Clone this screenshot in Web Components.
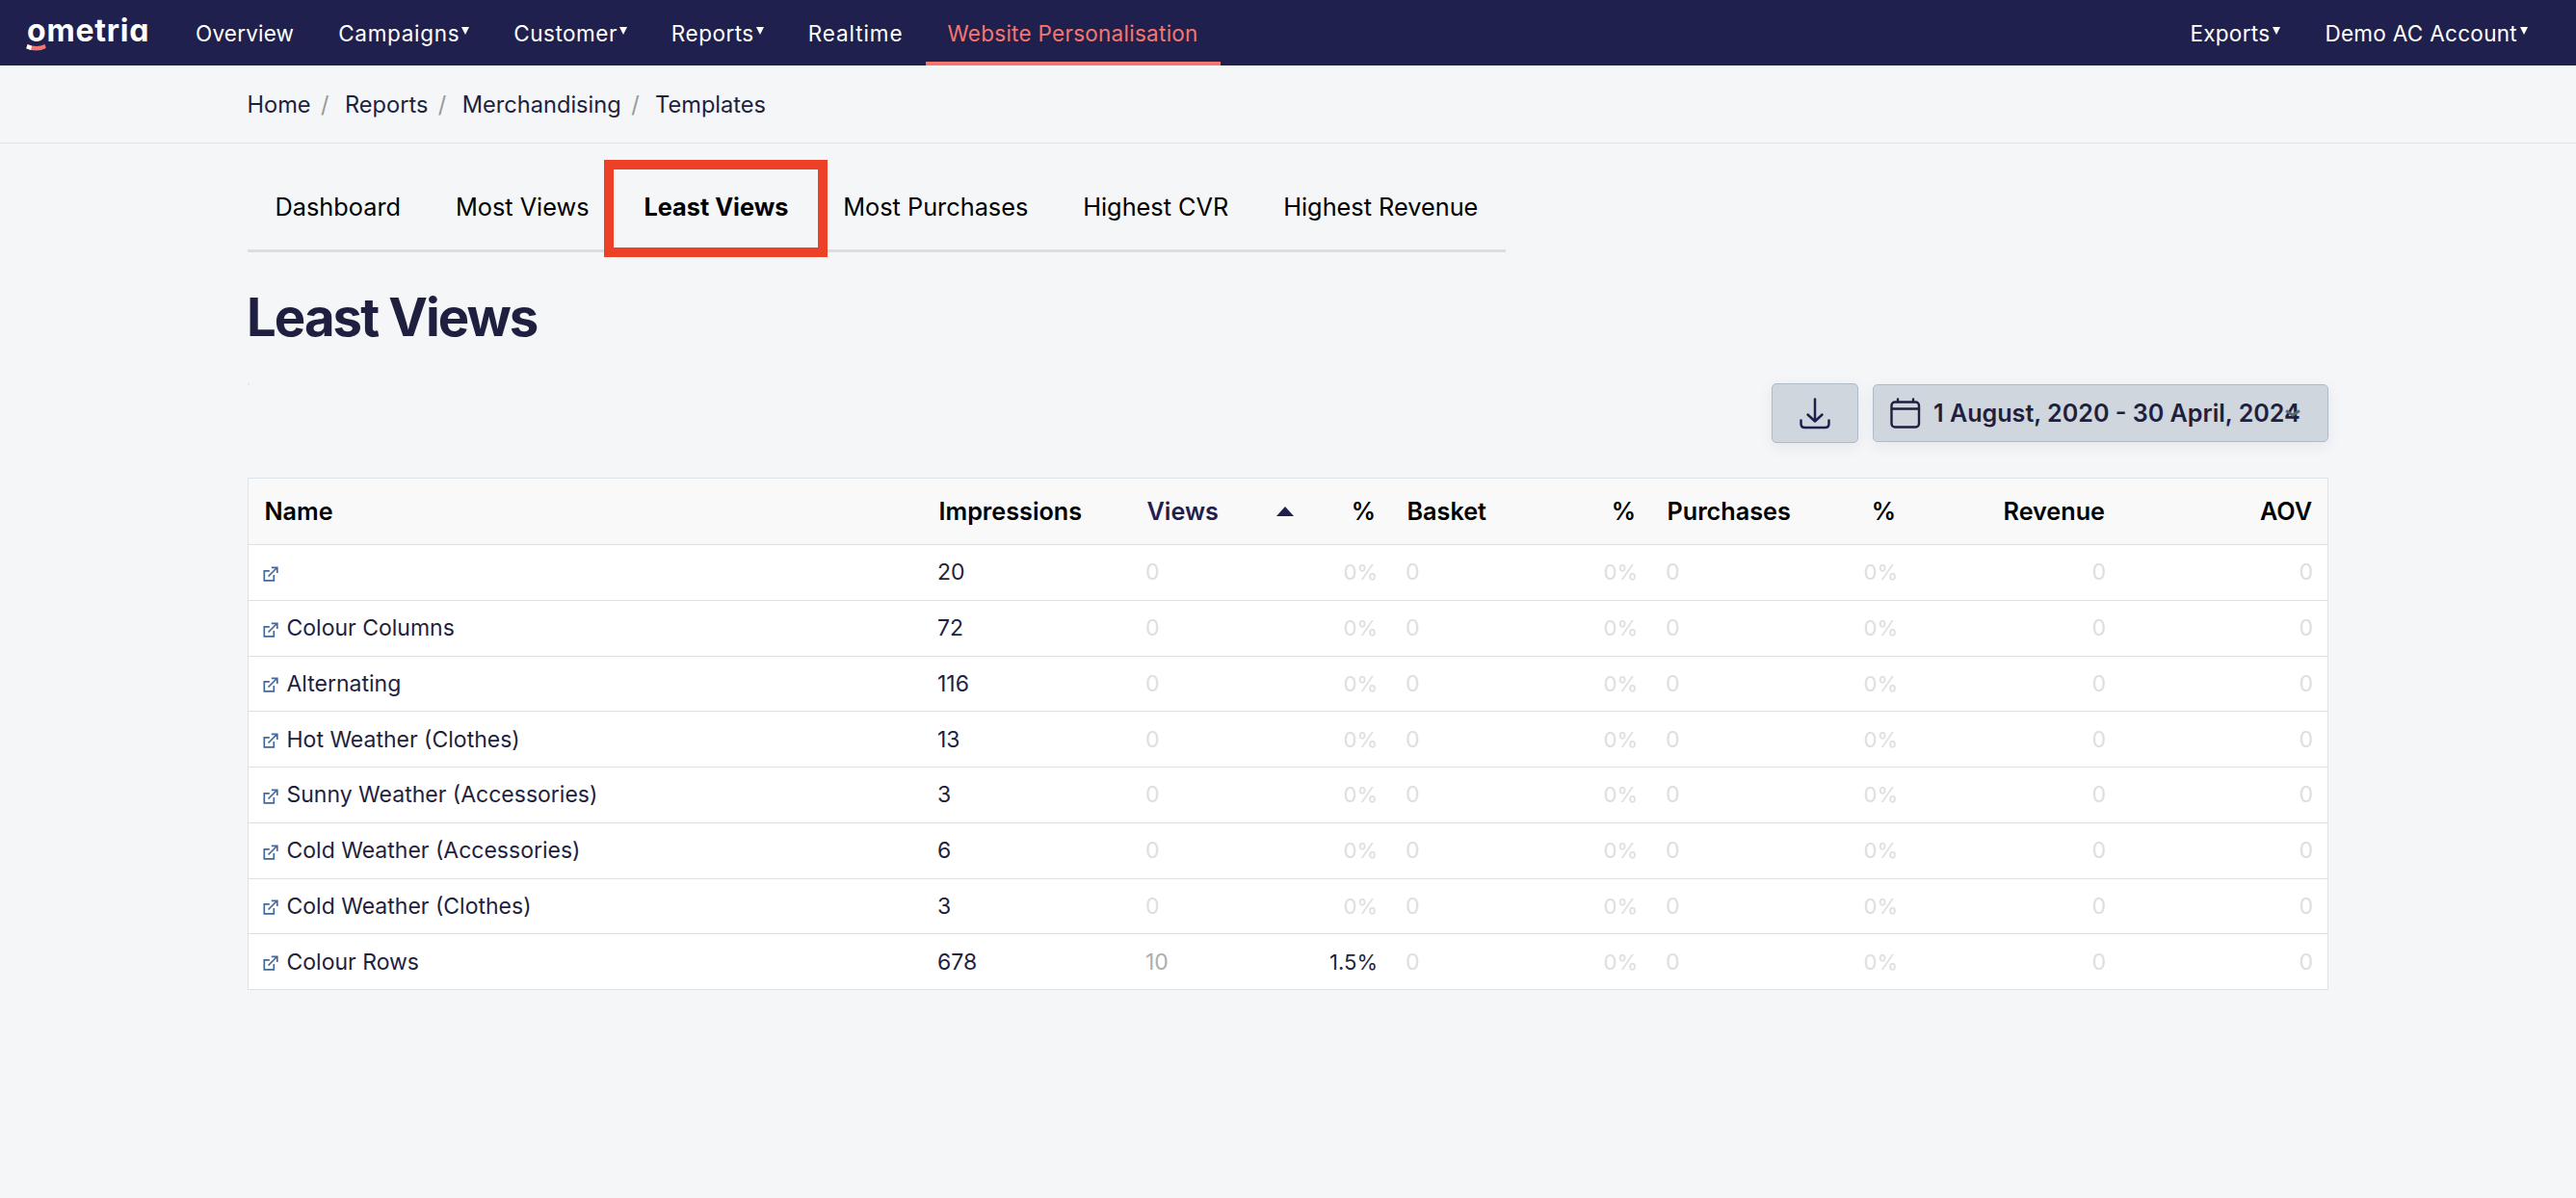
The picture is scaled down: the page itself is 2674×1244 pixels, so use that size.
<!DOCTYPE html>
<html lang="en">
<head>
<meta charset="utf-8">
<title>Least Views</title>
<style>
  body {
    margin: 0;
    background: #f4f6f8;
    color: #1f1f40;
    font-family: Inter, "Liberation Sans", sans-serif;
  }
  main {
    width: 2160px;
    margin-left: 257px;
  }
</style>
</head>
<body>

<om-navbar>
  <om-nav-item style="letter-spacing: .2px">Overview</om-nav-item>
  <om-nav-item menu style="letter-spacing: .7px">Campaigns</om-nav-item>
  <om-nav-item menu style="letter-spacing: .5px">Customer</om-nav-item>
  <om-nav-item menu style="letter-spacing: .5px">Reports</om-nav-item>
  <om-nav-item style="letter-spacing: .9px">Realtime</om-nav-item>
  <om-nav-item active style="letter-spacing: .27px">Website Personalisation</om-nav-item>
  <om-nav-item slot="account" menu style="letter-spacing: .3px">Exports</om-nav-item>
  <om-nav-item slot="account" menu style="letter-spacing: .3px">Demo AC Account</om-nav-item>
</om-navbar>

<om-breadcrumbs>
  <om-crumb>Home</om-crumb>
  <om-crumb>Reports</om-crumb>
  <om-crumb>Merchandising</om-crumb>
  <om-crumb last>Templates</om-crumb>
</om-breadcrumbs>

<main>
  <om-tabs>
    <om-tab>Dashboard</om-tab>
    <om-tab>Most Views</om-tab>
    <om-tab selected>Least Views</om-tab>
    <om-tab>Most Purchases</om-tab>
    <om-tab>Highest CVR</om-tab>
    <om-tab>Highest Revenue</om-tab>
  </om-tabs>
  <om-title>Least Views</om-title>
  <om-toolbar>
    <om-download></om-download>
    <om-date-range>1 August, 2020 - 30 April, 2024</om-date-range>
  </om-toolbar>
  <om-report-table></om-report-table>
</main>

<script>
// shared helper, every element gets an open shadow root
class OmElement extends HTMLElement {
  constructor() {
    super()
    this.attachShadow({mode: 'open'})
    this.shadowRoot.innerHTML = `<style>${this.styles()}</style>${this.template()}`
  }
  styles() { return ':host { display: block; }' }
  template() { return '<slot></slot>' }
}

class OmNavbar extends OmElement {
  styles() {
    return `
      :host {
        display: flex;
        align-items: stretch;
        justify-content: space-between;
        height: 68px;
        box-sizing: border-box;
        padding: 0 27px 0 28px;
        background: #1f204d;
        color: #fff;
      }
      .left, .right { display: flex; align-items: stretch; }
      .logo {
        position: relative;
        width: 152px;
        line-height: 63px;
        font-size: 32px;
        font-weight: 700;
        letter-spacing: .8px;
        font-feature-settings: "cv11";
      }
      .logo svg { position: absolute; left: -1px; top: 45px; }
    `
  }
  template() {
    return `
      <div class="left">
        <div class="logo">ometria
          <svg width="22" height="9" viewBox="0 0 22 9">
            <path d="M1.6 1 Q11 5 19.6 1 L20.8 5 Q11 10 .3 5.2 Z" fill="#f4776f"/>
            <path d="M1.6 1 Q4 2.3 6 2.6 L5.2 7 Q2.6 6.4 .3 5.2 Z" fill="#fff"/>
          </svg>
        </div>
        <slot></slot>
      </div>
      <div class="right"><slot name="account"></slot></div>
    `
  }
}

class OmNavItem extends OmElement {
  styles() {
    return `
      :host {
        display: flex;
        align-items: center;
        box-sizing: border-box;
        padding: 0 23px;
        font-size: 22.5px;
        white-space: nowrap;
      }
      :host([active]) {
        color: #f4776f;
        padding-top: 4px;
        border-bottom: 4px solid #f4776f;
      }
      svg { display: none; margin: -4px 0 0 2px; }
      :host([menu]) svg { display: block; }
      :host([slot]) svg { margin-left: 3px; }
    `
  }
  template() {
    return '<slot></slot><svg width="8" height="8"><path d="M0 0H8L4 8Z" fill="#fff"/></svg>'
  }
}

class OmBreadcrumbs extends OmElement {
  styles() {
    return `
      :host {
        display: flex;
        align-items: center;
        height: 80px;
        padding-left: 256.5px;
        border-bottom: 1px solid #dce3e9;
        font-size: 23.6px;
        font-weight: 420;
      }
    `
  }
}

class OmCrumb extends OmElement {
  styles() {
    return `
      :host { display: flex; }
      span { width: 29.4px; padding-right: 6px; text-align: center; color: #999; }
      :host([last]) span { display: none; }
    `
  }
  template() { return '<slot></slot><span>/</span>' }
}

class OmTabs extends OmElement {
  styles() {
    return `
      :host {
        display: flex;
        width: 1306px;
        height: 88px;
        margin-top: 22px;
        border-bottom: 3px solid #dcdddf;
      }
    `
  }
}

class OmTab extends OmElement {
  styles() {
    return `
      :host {
        position: relative;
        display: flex;
        align-items: center;
        box-sizing: border-box;
        padding: 0 28.4px 1px 28.5px;
        font-size: 25.3px;
        font-weight: 420;
        color: #000;
        white-space: nowrap;
      }
      :host([selected]) { font-weight: 700; }
      :host([selected])::after {
        content: "";
        position: absolute;
        inset: -5px -12px -8px -13px;
        border: 10px solid #ec4126;
      }
    `
  }
}

class OmTitle extends OmElement {
  styles() {
    return `
      :host {
        display: block;
        margin: 33px 0 35px -1px;
        font-size: 54.5px;
        font-weight: 660;
        line-height: 68px;
        letter-spacing: -1.95px;
      }
    `
  }
}

class OmToolbar extends OmElement {
  styles() {
    return `
      :host { display: flex; justify-content: space-between; }
      .dot { width: 2px; height: 2px; background: #e6e8ea; }
      .buttons { display: flex; align-items: center; gap: 15px; }
    `
  }
  template() {
    return '<div class="dot"></div><div class="buttons"><slot></slot></div>'
  }
}

const buttonStyles = `
  :host {
    display: flex;
    align-items: center;
    box-sizing: border-box;
    border: 1px solid #aebac8;
    border-radius: 5px;
    background: #cfd6de;
    box-shadow: 0 4px 16px rgba(31, 31, 64, .07);
  }
`

class OmDownload extends OmElement {
  styles() {
    return `${buttonStyles}
      :host { width: 90px; height: 62px; justify-content: center; }
    `
  }
  template() {
    return `
      <svg width="34" height="34" viewBox="0 0 34 34" fill="none" stroke="#1f204d" stroke-width="2.5" stroke-linecap="round" stroke-linejoin="round">
        <path d="M17 2.5V25M9.5 18.5L17 25.5L24.5 18.5"/>
        <path d="M2.5 24.5V28Q2.5 32 6.5 32H27.5Q31.5 32 31.5 28V24.5"/>
      </svg>
    `
  }
}

class OmDateRange extends OmElement {
  styles() {
    return `${buttonStyles}
      :host {
        position: relative;
        width: 473px;
        height: 60px;
        padding-left: 17px;
        font-size: 25.1px;
        font-weight: 630;
        white-space: nowrap;
      }
      .calendar { margin-right: 13px; }
      .chevron { position: absolute; left: 427px; top: 25px; }
    `
  }
  template() {
    return `
      <svg class="calendar" width="32" height="32" viewBox="0 0 32 32" fill="none" stroke="#1f1f40" stroke-width="2.4" stroke-linecap="round">
        <rect x="1.5" y="4.5" width="28.5" height="26" rx="3.5"/>
        <path d="M2 11.5H30M8 1.5V4M24 1.5V4"/>
      </svg>
      <slot></slot>
      <svg class="chevron" width="16" height="8" viewBox="0 0 16 8" fill="none" stroke="#5d6873" stroke-width="3">
        <path d="M1 1.5L8 6L15 1.5"/>
      </svg>
    `
  }
}

class OmReportTable extends HTMLElement {
  constructor() {
    super()
    this.attachShadow({mode: 'open'})
  }

  connectedCallback() {
    const rows = [
      ['', 20, 0, '0%'],
      ['Colour Columns', 72, 0, '0%'],
      ['Alternating', 116, 0, '0%'],
      ['Hot Weather (Clothes)', 13, 0, '0%'],
      ['Sunny Weather (Accessories)', 3, 0, '0%'],
      ['Cold Weather (Accessories)', 6, 0, '0%'],
      ['Cold Weather (Clothes)', 3, 0, '0%'],
      ['Colour Rows', 678, 10, '1.5%'],
    ]

    const style = `
      <style>
        :host {
          display: block;
          box-sizing: border-box;
          width: 2160px;
          margin-top: 36px;
          border: 1px solid #dce3e9;
          border-bottom: 0;
          background: #fff;
        }
        .row {
          display: grid;
          grid-template-columns: 700px 216px 170px 100px 170px 100px 170px 100px 217px 215px;
          align-items: center;
          box-sizing: border-box;
          height: 57.75px;
          border-bottom: 1px solid #dce1e6;
          font-size: 23px;
          font-weight: 425;
        }
        .row > div { padding: 0 15px; white-space: nowrap; }
        .row > .num { text-align: right; }
        .row > .pct { padding-right: 14px; font-size: 22px; }
        .row > .zero { color: #dedede; }
        .row > .low { color: #adadad; }
        .row > .name { display: flex; align-items: center; gap: 8.5px; }
        .name svg { margin-top: 3px; }
        .head {
          height: 69px;
          background: #f9f9f9;
          color: #000;
          font-size: 25.2px;
          font-weight: 620;
        }
        .head > div { padding: 0 16px 0 16.5px; }
        .head > .sorted {
          display: flex;
          align-items: center;
          justify-content: space-between;
          padding-right: 1px;
          color: #1f204d;
        }
      </style>`

    const link = `
      <svg width="16" height="16" viewBox="0 0 16 16" fill="none" stroke="#41699b" stroke-width="1.7">
        <path d="M6.8 4.8H1.3V14.8H11.3V9M5.5 10.5L14.5 1.5M8.8 1.3H14.8V7"/>
      </svg>`

    const cell = (value, type) => {
      const shade = value === 0 || value === '0%' ? 'zero' : value === 10 ? 'low' : ''
      return `<div class="${type} ${shade}">${value}</div>`
    }

    const head = `
      <div class="row head">
        <div>Name</div>
        <div>Impressions</div>
        <div class="sorted">Views<svg width="18" height="10"><path d="M0 10L9 0L18 10Z" fill="#1f204d"/></svg></div>
        <div class="num">%</div>
        <div>Basket</div>
        <div class="num">%</div>
        <div>Purchases</div>
        <div class="num">%</div>
        <div class="num">Revenue</div>
        <div class="num">AOV</div>
      </div>`

    const body = rows.map(([name, impressions, views, rate]) => `
      <div class="row">
        <div class="name">${link}<span>${name}</span></div>
        ${cell(impressions, '')}
        ${cell(views, '')}${cell(rate, 'num pct')}
        ${cell(0, '')}${cell('0%', 'num pct')}
        ${cell(0, '')}${cell('0%', 'num pct')}
        ${cell(0, 'num')}${cell(0, 'num')}
      </div>`).join('')

    this.shadowRoot.innerHTML = style + head + body
  }
}

customElements.define('om-navbar', OmNavbar)
customElements.define('om-nav-item', OmNavItem)
customElements.define('om-breadcrumbs', OmBreadcrumbs)
customElements.define('om-crumb', OmCrumb)
customElements.define('om-tabs', OmTabs)
customElements.define('om-tab', OmTab)
customElements.define('om-title', OmTitle)
customElements.define('om-toolbar', OmToolbar)
customElements.define('om-download', OmDownload)
customElements.define('om-date-range', OmDateRange)
customElements.define('om-report-table', OmReportTable)
</script>
</body>
</html>
